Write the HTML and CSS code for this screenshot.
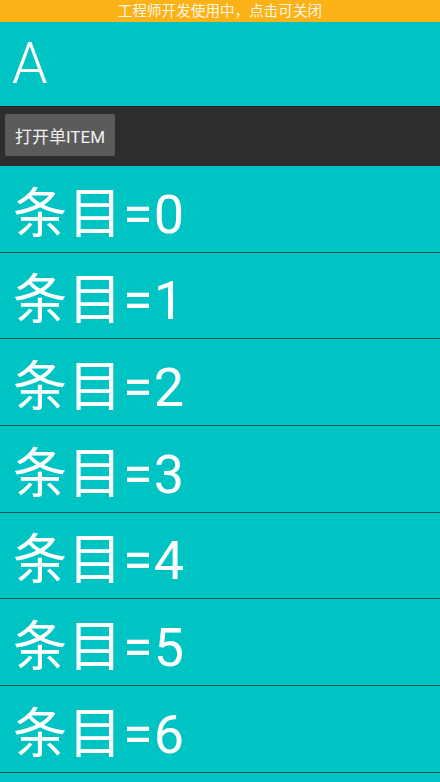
FILE: index.html
```html
<!DOCTYPE html>
<html lang="zh">
<head>
<meta charset="utf-8">
<link rel="stylesheet" href="styles.css">
</head>
<body>
<div class="banner">工程师开发使用中，点击可关闭</div>
<div class="header">A</div>
<div class="toolbar"><button class="btn">打开单ITEM</button></div>
<div class="list">
  <div class="item">条目=0</div>
  <div class="item">条目=1</div>
  <div class="item">条目=2</div>
  <div class="item">条目=3</div>
  <div class="item">条目=4</div>
  <div class="item">条目=5</div>
  <div class="item">条目=6</div>
</div>
</body>
</html>
```
FILE: styles.css
```css
html, body {
  margin: 0;
  padding: 0;
  height: 100%;
  background: #00c4c4;
  font-family: Roboto, "Noto Sans CJK SC", sans-serif;
  overflow: hidden;
}
.banner {
  height: 22px;
  background: #fbb217;
  color: #fff7e8;
  font-size: 14.6px;
  line-height: 22px;
  text-align: center;
}
.header {
  height: 84px;
  display: flex;
  align-items: center;
  padding-left: 12px;
  color: #fff;
  font-size: 57px;
  font-weight: 300;
  box-sizing: border-box;
  padding-bottom: 2px;
}
.toolbar {
  height: 60px;
  background: #2e2e2e;
  box-sizing: border-box;
  padding: 7px 5px;
  border-top: 1px solid #222;
  display: flex;
}
.btn {
  width: 110px;
  height: 42px;
  background: #5b5b5b;
  border: none;
  border-radius: 2px;
  color: #f2f2f2;
  font-family: Roboto, "Noto Sans CJK SC", sans-serif;
  font-size: 17px;
  padding: 0;
}
.list {
  display: flex;
  flex-direction: column;
}
.item {
  height: 86.67px;
  box-sizing: border-box;
  border-bottom: 1px solid #0b5858;
  display: flex;
  align-items: center;
  padding-left: 13px;
  padding-top: 1px;
  color: #fff;
  font-size: 54px;
  letter-spacing: 1px;
}
```
